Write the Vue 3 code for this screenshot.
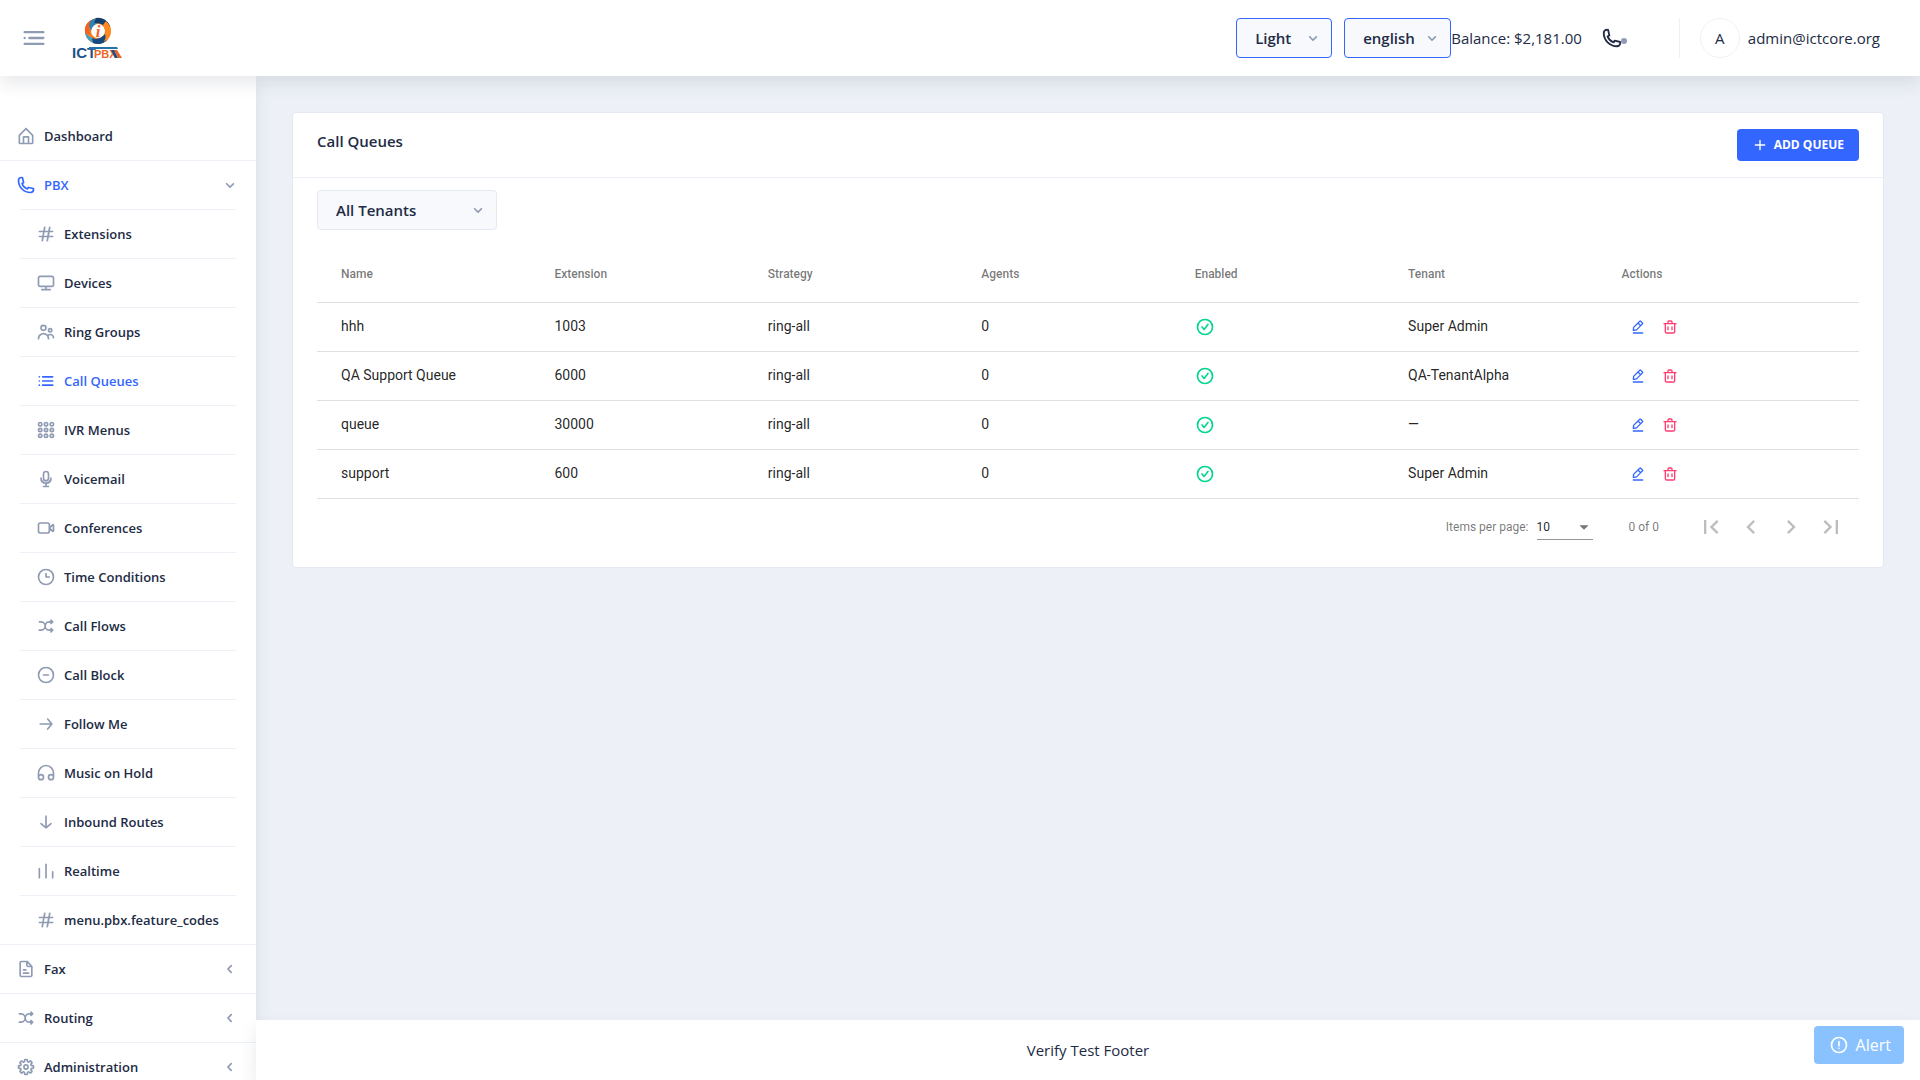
<script setup>
import { h, ref } from 'vue'

const ring = 'M12 2a10 10 0 1 0 10 10A10 10 0 0 0 12 2zm0 18a8 8 0 1 1 8-8 8 8 0 0 1-8 8z'
const dot = (x, y) => `M${x} ${y - 3}a3 3 0 1 0 3 3 3 3 0 0 0-3-3zm0 4a1 1 0 1 1 1-1 1 1 0 0 1-1 1z`

const icons = {
  menu: 'M4 11a1 1 0 1 0 0 2 1 1 0 0 0 0-2zM8 11h12a1 1 0 0 1 0 2H8a1 1 0 0 1 0-2zM4 16h16a1 1 0 0 1 0 2H4a1 1 0 0 1 0-2zM4 6h16a1 1 0 0 1 0 2H4a1 1 0 0 1 0-2z',
  home: 'M20.42 10.18L12.71 2.3a1 1 0 0 0-1.42 0l-7.71 7.89A2 2 0 0 0 3 11.62V20a2 2 0 0 0 1.89 2h14.22A2 2 0 0 0 21 20v-8.38a2.07 2.07 0 0 0-.58-1.44zM10 20v-6h4v6zm9 0h-3v-7a1 1 0 0 0-1-1H9a1 1 0 0 0-1 1v7H5v-8.42l7-7.15 7 7.19z',
  phone: 'M17.4 22A15.42 15.42 0 0 1 2 6.6 4.6 4.6 0 0 1 6.6 2a3.94 3.94 0 0 1 .77.07 3.79 3.79 0 0 1 .72.18 1 1 0 0 1 .65.75l1.37 6a1 1 0 0 1-.26.92c-.13.14-.14.15-1.37.79a9.91 9.91 0 0 0 4.87 4.89c.65-1.24.66-1.25.8-1.38a1 1 0 0 1 .92-.26l6 1.37a1 1 0 0 1 .72.65 4.34 4.34 0 0 1 .19.73 4.77 4.77 0 0 1 .06.76A4.6 4.6 0 0 1 17.4 22zM6.6 4A2.61 2.61 0 0 0 4 6.6 13.41 13.41 0 0 0 17.4 20a2.61 2.61 0 0 0 2.6-2.6v-.33L15.36 16l-.29.55c-.45.87-.78 1.5-1.62 1.16a11.85 11.85 0 0 1-7.18-7.21c-.36-.78.32-1.14 1.18-1.59L8 8.64 6.93 4z',
  hash: 'M20 14h-4.3l.73-4H20a1 1 0 0 0 0-2h-3.21l.69-3.81A1 1 0 0 0 16.64 3a1 1 0 0 0-1.22.82L14.67 8h-3.88l.69-3.81A1 1 0 0 0 10.64 3a1 1 0 0 0-1.22.82L8.67 8H4a1 1 0 0 0 0 2h4.3l-.73 4H4a1 1 0 0 0 0 2h3.21l-.69 3.81A1 1 0 0 0 7.36 21a1 1 0 0 0 1.22-.82L9.33 16h3.88l-.69 3.81a1 1 0 0 0 .84 1.19 1 1 0 0 0 1.22-.82l.75-4.18H20a1 1 0 0 0 0-2zM9.6 14l.73-4h3.88l-.73 4z',
  monitor: 'M19 3H5a3 3 0 0 0-3 3v8a3 3 0 0 0 3 3h6v2H7a1 1 0 0 0 0 2h10a1 1 0 0 0 0-2h-4v-2h6a3 3 0 0 0 3-3V6a3 3 0 0 0-3-3zm1 11a1 1 0 0 1-1 1H5a1 1 0 0 1-1-1V6a1 1 0 0 1 1-1h14a1 1 0 0 1 1 1z',
  people: 'M9 11a4 4 0 1 0-4-4 4 4 0 0 0 4 4zm0-6a2 2 0 1 1-2 2 2 2 0 0 1 2-2zM17 13a3 3 0 1 0-3-3 3 3 0 0 0 3 3zm0-4a1 1 0 1 1-1 1 1 1 0 0 1 1-1zM17 14a5 5 0 0 0-3.06 1.05A7 7 0 0 0 2 20a1 1 0 0 0 2 0 5 5 0 0 1 10 0 1 1 0 0 0 2 0 6.9 6.9 0 0 0-.86-3.35A3 3 0 0 1 20 19a1 1 0 0 0 2 0 5 5 0 0 0-5-5z',
  list: 'M4 6a1 1 0 1 0 0 2 1 1 0 0 0 0-2zM4 11a1 1 0 1 0 0 2 1 1 0 0 0 0-2zM4 16a1 1 0 1 0 0 2 1 1 0 0 0 0-2zM8 11h12a1 1 0 0 1 0 2H8a1 1 0 0 1 0-2zM8 16h12a1 1 0 0 1 0 2H8a1 1 0 0 1 0-2zM8 6h12a1 1 0 0 1 0 2H8a1 1 0 0 1 0-2z',
  keypad: [5, 12, 19].flatMap((y) => [5, 12, 19].map((x) => dot(x, y))).join(''),
  mic: 'M12 15a4 4 0 0 0 4-4V6a4 4 0 0 0-8 0v5a4 4 0 0 0 4 4zm-2-9a2 2 0 0 1 4 0v5a2 2 0 0 1-4 0zM19 11a1 1 0 0 0-2 0 5 5 0 0 1-10 0 1 1 0 0 0-2 0 7 7 0 0 0 6 6.92V20H8.89a.89.89 0 0 0-.89.89v.22a.89.89 0 0 0 .89.89h6.22a.89.89 0 0 0 .89-.89v-.22a.89.89 0 0 0-.89-.89H13v-2.08A7 7 0 0 0 19 11z',
  video: 'M21 7.15a1.7 1.7 0 0 0-1.85.3l-2.15 2V8a3 3 0 0 0-3-3H5a3 3 0 0 0-3 3v8a3 3 0 0 0 3 3h9a3 3 0 0 0 3-3v-1.45l2.16 2a1.74 1.74 0 0 0 1.16.45 1.68 1.68 0 0 0 .69-.15 1.6 1.6 0 0 0 1-1.48V8.63A1.6 1.6 0 0 0 21 7.15zM15 16a1 1 0 0 1-1 1H5a1 1 0 0 1-1-1V8a1 1 0 0 1 1-1h9a1 1 0 0 1 1 1zm5-1.75L17.56 12 20 9.75z',
  clock: ring + 'M16 11h-3V8a1 1 0 0 0-2 0v4a1 1 0 0 0 1 1h4a1 1 0 0 0 0-2z',
  shuffle: 'M18.71 14.29a1 1 0 0 0-1.42 1.42l.29.29H16a4 4 0 0 1 0-8h1.59l-.3.29a1 1 0 0 0 0 1.42A1 1 0 0 0 18 10a1 1 0 0 0 .71-.29l2-2A1 1 0 0 0 21 7a1 1 0 0 0-.29-.71l-2-2a1 1 0 0 0-1.42 1.42l.29.29H16a6 6 0 0 0-5 2.69A6 6 0 0 0 6 6H4a1 1 0 0 0 0 2h2a4 4 0 0 1 0 8H4a1 1 0 0 0 0 2h2a6 6 0 0 0 5-2.69A6 6 0 0 0 16 18h1.59l-.3.29a1 1 0 0 0 0 1.42A1 1 0 0 0 18 20a1 1 0 0 0 .71-.29l2-2A1 1 0 0 0 21 17a1 1 0 0 0-.29-.71z',
  minus: ring + 'M15 11H9a1 1 0 0 0 0 2h6a1 1 0 0 0 0-2z',
  forward: 'M5 13h11.86l-3.63 4.36a1 1 0 0 0 1.54 1.28l5-6a1.19 1.19 0 0 0 .09-.15c0-.05.05-.08.07-.13A1 1 0 0 0 20 12a1 1 0 0 0-.07-.36c0-.05-.05-.08-.07-.13a1.19 1.19 0 0 0-.09-.15l-5-6A1 1 0 0 0 14 5a1 1 0 0 0-.64.23 1 1 0 0 0-.13 1.41L16.86 11H5a1 1 0 0 0 0 2z',
  headphones: 'M12 2A10.2 10.2 0 0 0 2 12.37V17a4 4 0 1 0 4-4 3.91 3.91 0 0 0-2 .56v-1.19A8.2 8.2 0 0 1 12 4a8.2 8.2 0 0 1 8 8.37v1.19a3.91 3.91 0 0 0-2-.56 4 4 0 1 0 4 4v-4.63A10.2 10.2 0 0 0 12 2zM6 15a2 2 0 1 1-2 2 2 2 0 0 1 2-2zm12 4a2 2 0 1 1 2-2 2 2 0 0 1-2 2z',
  downward: 'M18.77 13.36a1 1 0 0 0-1.41-.13L13 16.86V5a1 1 0 0 0-2 0v11.86l-4.36-3.63a1 1 0 1 0-1.28 1.54l6 5 .15.09.13.07a1 1 0 0 0 .72 0l.13-.07.15-.09 6-5a1 1 0 0 0 .13-1.41z',
  chart: 'M12 3a1 1 0 0 0-1 1v16a1 1 0 0 0 2 0V4a1 1 0 0 0-1-1zM20 12a1 1 0 0 0-1 1v7a1 1 0 0 0 2 0v-7a1 1 0 0 0-1-1zM4 8a1 1 0 0 0-1 1v11a1 1 0 0 0 2 0V9a1 1 0 0 0-1-1z',
  file: 'M15 16H9a1 1 0 0 0 0 2h6a1 1 0 0 0 0-2zM9 14h3a1 1 0 0 0 0-2H9a1 1 0 0 0 0 2zM19.74 8.33l-5.44-6a1 1 0 0 0-.74-.33h-7A2.53 2.53 0 0 0 4 4.5v15A2.53 2.53 0 0 0 6.56 22h10.88A2.53 2.53 0 0 0 20 19.5V9a1 1 0 0 0-.26-.67zM14 5l2.74 3h-2a.79.79 0 0 1-.74-.85zm3.44 15H6.56a.53.53 0 0 1-.56-.5v-15a.53.53 0 0 1 .56-.5H12v3.15A2.79 2.79 0 0 0 14.71 10H18v9.5a.53.53 0 0 1-.56.5z',
  settings: 'M12.94 22h-1.89a1.68 1.68 0 0 1-1.68-1.68v-1.09a.34.34 0 0 0-.22-.29.38.38 0 0 0-.41 0l-.74.8a1.67 1.67 0 0 1-2.37 0L4.26 18.4a1.66 1.66 0 0 1-.5-1.19 1.72 1.72 0 0 1 .5-1.21l.74-.74a.34.34 0 0 0 0-.37c-.06-.15-.16-.26-.3-.26H3.68A1.69 1.69 0 0 1 2 12.94v-1.89a1.68 1.68 0 0 1 1.68-1.68h1.09a.34.34 0 0 0 .29-.22.38.38 0 0 0 0-.41L4.26 8a1.67 1.67 0 0 1 0-2.37L5.6 4.26a1.65 1.65 0 0 1 1.18-.5 1.72 1.72 0 0 1 1.22.5l.74.74a.34.34 0 0 0 .37 0c.15-.06.26-.16.26-.3V3.68A1.69 1.69 0 0 1 11.06 2H13a1.68 1.68 0 0 1 1.68 1.68v1.09a.34.34 0 0 0 .22.29.38.38 0 0 0 .41 0l.69-.8a1.67 1.67 0 0 1 2.37 0l1.37 1.34a1.67 1.67 0 0 1 .5 1.19 1.63 1.63 0 0 1-.5 1.18l-.74.74a.34.34 0 0 0 0 .37c.06.15.16.26.3.26h1.09A1.69 1.69 0 0 1 22 11.06V13a1.68 1.68 0 0 1-1.68 1.68h-1.09a.34.34 0 0 0-.29.22.34.34 0 0 0 0 .37l.77.77a1.67 1.67 0 0 1 0 2.37l-1.31 1.33a1.65 1.65 0 0 1-1.18.5 1.72 1.72 0 0 1-1.19-.5l-.77-.74a.34.34 0 0 0-.37 0c-.15.06-.26.16-.26.3v1.09A1.69 1.69 0 0 1 12.94 22zm-1.57-2h1.26v-.77a2.33 2.33 0 0 1 1.46-2.14 2.36 2.36 0 0 1 2.59.47l.54.54.88-.88-.54-.55a2.34 2.34 0 0 1-.48-2.56 2.33 2.33 0 0 1 2.14-1.45H20v-1.29h-.77a2.33 2.33 0 0 1-2.14-1.46 2.36 2.36 0 0 1 .47-2.59l.54-.54-.88-.88-.55.54a2.39 2.39 0 0 1-4-1.67V4h-1.3v.77a2.33 2.33 0 0 1-1.46 2.14 2.36 2.36 0 0 1-2.59-.47l-.54-.54-.88.88.54.55a2.39 2.39 0 0 1-1.67 4H4v1.26h.77a2.33 2.33 0 0 1 2.14 1.46 2.36 2.36 0 0 1-.47 2.59l-.54.54.88.88.55-.54a2.39 2.39 0 0 1 4 1.67zM12 15.5a3.5 3.5 0 1 1 3.5-3.5 3.5 3.5 0 0 1-3.5 3.5zm0-5a1.5 1.5 0 1 0 1.5 1.5 1.5 1.5 0 0 0-1.5-1.5z',
  down: 'M12 15.5a1 1 0 0 1-.71-.29l-4-4a1 1 0 1 1 1.42-1.42L12 13.1l3.3-3.18a1 1 0 1 1 1.38 1.44l-4 3.86a1 1 0 0 1-.68.28z',
  left: 'M13.36 17a1 1 0 0 1-.72-.31l-3.86-4a1 1 0 0 1 0-1.4l4-4a1 1 0 1 1 1.42 1.42L10.9 12l3.18 3.3a1 1 0 0 1 0 1.41 1 1 0 0 1-.72.29z',
  check: ring + 'M14.7 8.39l-3.78 5-1.63-2.11a1 1 0 0 0-1.58 1.23l2.43 3.11a1 1 0 0 0 .79.38 1 1 0 0 0 .79-.39l4.57-6a1 1 0 1 0-1.6-1.22z',
  edit: 'M19 20H5a1 1 0 0 0 0 2h14a1 1 0 0 0 0-2zM5 18h.09l4.17-.38a2 2 0 0 0 1.21-.57l9-9a1.92 1.92 0 0 0-.07-2.71L16.66 2.6A2 2 0 0 0 14 2.53l-9 9a2 2 0 0 0-.57 1.21L4 16.91a1 1 0 0 0 .29.8A1 1 0 0 0 5 18zM15.27 4L18 6.73l-2 1.95L13.32 6zm-8.9 8.91L12 7.32l2.7 2.7-5.6 5.61-3 .28z',
  trash: 'M21 6h-5V4.33A2.42 2.42 0 0 0 13.5 2h-3A2.42 2.42 0 0 0 8 4.33V6H3a1 1 0 0 0 0 2h1v11a3 3 0 0 0 3 3h10a3 3 0 0 0 3-3V8h1a1 1 0 0 0 0-2zM10 4.33c0-.16.21-.33.5-.33h3c.29 0 .5.17.5.33V6h-4zM18 19a1 1 0 0 1-1 1H7a1 1 0 0 1-1-1V8h12zM9 17a1 1 0 0 0 1-1v-4a1 1 0 0 0-2 0v4a1 1 0 0 0 1 1zM15 17a1 1 0 0 0 1-1v-4a1 1 0 0 0-2 0v4a1 1 0 0 0 1 1z',
  alert: ring + 'M12 15a1 1 0 1 0 0 2 1 1 0 0 0 0-2zM12 7a1 1 0 0 0-1 1v5a1 1 0 0 0 2 0V8a1 1 0 0 0-1-1z',
  plus: 'M19 11h-6V5a1 1 0 0 0-2 0v6H5a1 1 0 0 0 0 2h6v6a1 1 0 0 0 2 0v-6h6a1 1 0 0 0 0-2z',
  caret: 'M7 10l5 5 5-5z',
  pageFirst: 'M18.41 16.59L13.82 12l4.59-4.59L17 6l-6 6 6 6zM6 6h2v12H6z',
  pagePrev: 'M15.41 7.41L14 6l-6 6 6 6 1.41-1.41L10.83 12z',
  pageNext: 'M10 6L8.59 7.41 13.17 12l-4.58 4.59L10 18l6-6z',
  pageLast: 'M5.59 7.41L10.18 12l-4.59 4.59L7 18l6-6-6-6zM16 6h2v12h-2z',
}

const Icon = (props) =>
  h('svg', { viewBox: '0 0 24 24', width: props.size, height: props.size, fill: 'currentColor', 'aria-hidden': 'true' }, [
    h('path', { d: icons[props.name] }),
  ])
Icon.props = { name: String, size: { type: Number, default: 20 } }

const menu = [
  { label: 'Dashboard', icon: 'home' },
  {
    label: 'PBX',
    icon: 'phone',
    active: true,
    children: [
      { label: 'Extensions', icon: 'hash' },
      { label: 'Devices', icon: 'monitor' },
      { label: 'Ring Groups', icon: 'people' },
      { label: 'Call Queues', icon: 'list', active: true },
      { label: 'IVR Menus', icon: 'keypad' },
      { label: 'Voicemail', icon: 'mic' },
      { label: 'Conferences', icon: 'video' },
      { label: 'Time Conditions', icon: 'clock' },
      { label: 'Call Flows', icon: 'shuffle' },
      { label: 'Call Block', icon: 'minus' },
      { label: 'Follow Me', icon: 'forward' },
      { label: 'Music on Hold', icon: 'headphones' },
      { label: 'Inbound Routes', icon: 'downward' },
      { label: 'Realtime', icon: 'chart' },
      { label: 'menu.pbx.feature_codes', icon: 'hash' },
    ],
  },
  { label: 'Fax', icon: 'file', collapsed: true },
  { label: 'Routing', icon: 'shuffle', collapsed: true },
  { label: 'Administration', icon: 'settings', collapsed: true },
]

const columns = ['Name', 'Extension', 'Strategy', 'Agents', 'Enabled', 'Tenant', 'Actions']
const queues = [
  { name: 'hhh', extension: '1003', strategy: 'ring-all', agents: 0, tenant: 'Super Admin' },
  { name: 'QA Support Queue', extension: '6000', strategy: 'ring-all', agents: 0, tenant: 'QA-TenantAlpha' },
  { name: 'queue', extension: '30000', strategy: 'ring-all', agents: 0, tenant: '—' },
  { name: 'support', extension: '600', strategy: 'ring-all', agents: 0, tenant: 'Super Admin' },
]
const pagers = [
  { label: 'First page', icon: 'pageFirst' },
  { label: 'Previous page', icon: 'pagePrev' },
  { label: 'Next page', icon: 'pageNext' },
  { label: 'Last page', icon: 'pageLast' },
]

const theme = ref('Light')
const language = ref('english')
const tenant = ref('All Tenants')
const pageSize = ref('10')
</script>

<template>
  <div class="layout">
    <header class="header">
      <div class="header-left">
        <button class="plain toggle" type="button" aria-label="Toggle menu"><Icon name="menu" :size="28" /></button>
        <a class="logo" href="#" aria-label="ICTPBX home">
          <svg width="52" height="44" viewBox="0 0 52 44">
            <circle cx="26" cy="15" r="10" fill="none" stroke="#f7801f" stroke-width="6" />
            <path d="M17 6A13 13 0 0 1 37 8Q30 3 24 8Q20 10 19 15Q16 10 17 6z" fill="#2b83b8" />
            <path d="M24 2A13 13 0 0 1 38 10L34 13Q31 6 22 7z" fill="#14406f" />
            <path d="M13 14Q14 19 20 22Q25 25 32 20L35 24A13 13 0 0 1 13 14z" fill="#3aa0d0" />
            <path d="M20 22Q27 25 33 18L35 24A13 13 0 0 1 21 27z" fill="#134a80" />
            <path d="M13 17A13 13 0 0 1 19 4Q15 11 19 19z" fill="#f4621f" />
            <path d="M34 5A13 13 0 0 1 32 26Q36 18 31 9z" fill="#ff8a1f" />
            <text x="26" y="21" class="logo-i" text-anchor="middle">i</text>
            <text x="0" y="42" class="logo-ict">ICT</text>
            <path d="M17 31h28l1 2H17z" fill="#2471a8" />
            <text x="22" y="42" class="logo-pbx">PBX</text>
            <path d="M42 34h3l5 8h-4z" fill="#e8622c" />
            <path d="M39 34h3l4 8h-3z" fill="#1c4f86" />
          </svg>
        </a>
      </div>
      <div class="header-right">
        <div class="select header-select theme">
          <select v-model="theme" aria-label="Theme"><option>Light</option></select>
          <Icon name="down" class="select-arrow" />
        </div>
        <div class="select header-select language">
          <select v-model="language" aria-label="Language"><option>english</option></select>
          <Icon name="down" class="select-arrow" />
        </div>
        <span class="balance">Balance: $2,181.00</span>
        <button class="plain call" type="button" aria-label="Phone">
          <Icon name="phone" :size="22" />
          <span class="status"></span>
        </button>
        <a class="user" href="#">
          <span class="avatar">A</span>
          <span>admin@ictcore.org</span>
        </a>
      </div>
    </header>

    <div class="body">
      <nav class="sidebar" aria-label="Main">
        <ul class="menu">
          <li v-for="item in menu" :key="item.label" class="menu-group">
            <a class="menu-link" :class="{ active: item.active }" href="#">
              <Icon :name="item.icon" class="menu-icon" />
              <span class="menu-label">{{ item.label }}</span>
              <Icon v-if="item.children" name="down" class="menu-chevron" />
              <Icon v-if="item.collapsed" name="left" class="menu-chevron" />
            </a>
            <ul v-if="item.children" class="submenu">
              <li v-for="child in item.children" :key="child.label" class="submenu-item">
                <a class="menu-link" :class="{ active: child.active }" href="#">
                  <Icon :name="child.icon" class="menu-icon" />
                  <span class="menu-label">{{ child.label }}</span>
                </a>
              </li>
            </ul>
          </li>
        </ul>
      </nav>

      <div class="content">
        <main class="main">
          <section class="card">
            <header class="card-header">
              <h1 class="card-title">Call Queues</h1>
              <button class="add" type="button"><Icon name="plus" :size="16" />ADD QUEUE</button>
            </header>
            <div class="card-body">
              <div class="select tenant">
                <select v-model="tenant" aria-label="Tenant"><option>All Tenants</option></select>
                <Icon name="down" class="select-arrow" />
              </div>
              <table class="table">
                <thead>
                  <tr><th v-for="c in columns" :key="c" scope="col">{{ c }}</th></tr>
                </thead>
                <tbody>
                  <tr v-for="q in queues" :key="q.name">
                    <td>{{ q.name }}</td>
                    <td>{{ q.extension }}</td>
                    <td>{{ q.strategy }}</td>
                    <td>{{ q.agents }}</td>
                    <td class="enabled"><Icon name="check" /></td>
                    <td>{{ q.tenant }}</td>
                    <td class="actions">
                      <button class="plain action edit" type="button" :aria-label="`Edit ${q.name}`"><Icon name="edit" :size="16" /></button>
                      <button class="plain action delete" type="button" :aria-label="`Delete ${q.name}`"><Icon name="trash" :size="16" /></button>
                    </td>
                  </tr>
                </tbody>
              </table>
              <div class="paginator">
                <label for="page-size">Items per page:</label>
                <div class="page-size">
                  <select id="page-size" v-model="pageSize"><option>10</option></select>
                  <Icon name="caret" :size="22" class="page-caret" />
                </div>
                <span class="range">0 of 0</span>
                <button v-for="p in pagers" :key="p.icon" class="plain pager" type="button" :aria-label="p.label">
                  <Icon :name="p.icon" :size="28" />
                </button>
              </div>
            </div>
          </section>
        </main>
        <footer class="footer">
          <span>Verify Test Footer</span>
          <button class="alert" type="button"><Icon name="alert" />Alert</button>
        </footer>
      </div>
    </div>
  </div>
</template>

<style>
body {
  margin: 0;
}
</style>

<style scoped>
.layout {
  display: flex;
  flex-direction: column;
  height: 100vh;
  overflow: hidden;
  background: #edf1f7;
  color: #222b45;
  font-family: "Open Sans", sans-serif;
  font-size: 15px;
  line-height: 24px;
}
.layout :deep(svg) {
  display: block;
  flex: none;
}
a {
  color: inherit;
  text-decoration: none;
}
ul {
  list-style: none;
  margin: 0;
  padding: 0;
}
button,
select {
  font-family: inherit;
  color: inherit;
  cursor: pointer;
}
.plain {
  display: flex;
  align-items: center;
  justify-content: center;
  padding: 0;
  border: 0;
  background: none;
}

.header {
  position: relative;
  z-index: 3;
  flex: none;
  display: flex;
  align-items: center;
  justify-content: space-between;
  height: 76px;
  padding: 0 40px 0 20px;
  box-sizing: border-box;
  background: #fff;
  box-shadow: 0 8px 16px 0 rgba(44, 51, 73, 0.1);
}
.header-left,
.header-right {
  display: flex;
  align-items: center;
}
.toggle {
  color: #8f9bb3;
}
.logo {
  margin-left: 24px;
}
.logo-i {
  font: italic 700 17px "Liberation Serif", serif;
  fill: #f0652a;
}
.logo-ict {
  font: 700 15px "Liberation Sans", sans-serif;
  fill: #1d5288;
}
.logo-pbx {
  font: 700 11px "Liberation Sans", sans-serif;
  fill: #f0652a;
}

.select {
  position: relative;
}
.select select {
  appearance: none;
  display: block;
  width: 100%;
  height: 40px;
  padding: 0 40px 0 18px;
  border: 1px solid #e4e9f2;
  border-radius: 4px;
  background: #f7f9fc;
  font-size: 15px;
  font-weight: 600;
}
.select-arrow {
  position: absolute;
  top: 10px;
  right: 9px;
  color: #8f9bb3;
  pointer-events: none;
}
.header-select select {
  border-color: #3366ff;
  padding-right: 24px;
}
.theme {
  width: 96px;
  margin-right: 12px;
}
.language {
  width: 107px;
}
.call {
  position: relative;
  margin-left: 19px;
}
.status {
  position: absolute;
  right: -4px;
  bottom: 5px;
  width: 6px;
  height: 6px;
  border-radius: 50%;
  background: #8f9bb3;
}
.user {
  display: flex;
  align-items: center;
  gap: 8px;
  margin-left: 56px;
  padding-left: 20px;
  border-left: 1px solid #edf1f7;
}
.avatar {
  width: 40px;
  height: 40px;
  box-sizing: border-box;
  border: 1px solid #edf1f7;
  border-radius: 50%;
  line-height: 38px;
  text-align: center;
}

.body {
  flex: 1;
  display: flex;
  min-height: 0;
}
.sidebar {
  position: relative;
  z-index: 1;
  flex: none;
  width: 256px;
  background: #fff;
  box-shadow: 0 8px 16px 0 rgba(44, 51, 73, 0.1);
}
.menu {
  height: 100%;
  box-sizing: border-box;
  padding-top: 36px;
  overflow: hidden;
}
.menu-group {
  border-bottom: 1px solid #edf1f7;
}
.menu-link {
  display: flex;
  align-items: center;
  gap: 8px;
  height: 48px;
  padding: 0 16px;
  font-size: 13px;
  font-weight: 600;
}
.menu-label {
  flex: 1;
}
.menu-icon,
.menu-chevron {
  color: #8f9bb3;
}
.active,
.active .menu-icon {
  color: #3366ff;
}
.submenu {
  padding: 0 20px;
}
.submenu-item {
  border-top: 1px solid #edf1f7;
}

.content {
  flex: 1;
  display: flex;
  flex-direction: column;
  min-width: 0;
}
.main {
  flex: 1;
  min-height: 0;
  padding: 36px 36px 0;
}
.card {
  border: 1px solid #e4e9f2;
  border-radius: 4px;
  background: #fff;
}
.card-header {
  display: flex;
  align-items: flex-start;
  justify-content: space-between;
  padding: 16px 24px;
  border-bottom: 1px solid #edf1f7;
}
.card-title {
  margin: 0;
  font-size: 15px;
  font-weight: 600;
}
.add {
  display: flex;
  align-items: center;
  gap: 6px;
  height: 32px;
  padding: 0 15px 1px;
  border: 0;
  border-radius: 4px;
  background: #3366ff;
  color: #fff;
  font-size: 12px;
  font-weight: 700;
}
.card-body {
  padding: 12px 24px;
}
.tenant {
  width: 180px;
}

.table {
  display: block;
  margin-top: 16px;
  font-family: Roboto, sans-serif;
  font-size: 14px;
  color: rgba(0, 0, 0, 0.87);
}
.table thead,
.table tbody {
  display: block;
}
.table tr {
  display: flex;
  align-items: center;
  height: 48px;
  padding: 0 24px;
  border-bottom: 1px solid #e0e0e0;
}
.table thead tr {
  height: 56px;
}
.table th,
.table td {
  flex: 1;
  padding: 0;
  text-align: left;
}
.table td {
  padding-bottom: 2px;
}
.table th {
  font-size: 12px;
  font-weight: 500;
  color: rgba(0, 0, 0, 0.54);
}
.table .enabled,
.table .actions {
  padding-bottom: 0;
}
.enabled {
  color: #00d68f;
}
.table .actions {
  display: flex;
}
.action {
  width: 32px;
  height: 32px;
}
.edit {
  color: #3366ff;
}
.delete {
  color: #ff3d71;
}

.paginator {
  display: flex;
  align-items: center;
  justify-content: flex-end;
  height: 56px;
  padding-right: 8px;
  font-family: Roboto, sans-serif;
  font-size: 12px;
  color: rgba(0, 0, 0, 0.54);
}
.page-size {
  position: relative;
  width: 56px;
  margin: 0 36px 0 8px;
}
.page-size select {
  appearance: none;
  display: block;
  width: 100%;
  height: 26px;
  padding: 0;
  border: 0;
  border-bottom: 1px solid #949494;
  border-radius: 0;
  background: none;
  font-size: 12px;
  color: rgba(0, 0, 0, 0.87);
}
.page-caret {
  position: absolute;
  top: 2px;
  right: -2px;
  pointer-events: none;
}
.range {
  margin-right: 32px;
}
.pager {
  width: 40px;
  height: 40px;
  color: rgba(0, 0, 0, 0.26);
}

.footer {
  position: relative;
  z-index: 2;
  flex: none;
  display: flex;
  align-items: center;
  justify-content: center;
  height: 60px;
  background: #fff;
  box-shadow: 0 8px 16px 0 rgba(44, 51, 73, 0.1);
}
.alert {
  position: absolute;
  right: 16px;
  bottom: 16px;
  display: flex;
  align-items: center;
  gap: 7px;
  height: 38px;
  padding: 0 13px 0 15px;
  border: 0;
  border-radius: 4px;
  background: #8ac2ff;
  color: #fff;
  font-size: 16px;
}
</style>
